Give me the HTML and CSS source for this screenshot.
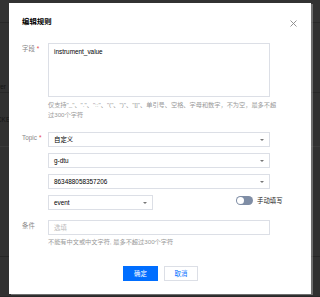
FILE: index.html
```html
<!DOCTYPE html>
<html lang="zh-CN">
<head>
<meta charset="utf-8">
<title>编辑规则</title>
<link rel="stylesheet" href="styles.css">
</head>
<body>
<div class="page">
  <div class="page-row r1"></div>
  <div class="page-row r2"><span>ver</span></div>
  <div class="page-row r3"><span>CKE</span></div>
  <div class="page-row r4"></div>
  <div class="page-row r5"></div>
</div>

<div class="modal">
  <div class="modal-head">
    <h3 class="modal-title">编辑规则</h3>
    <svg class="close" width="7" height="7" viewBox="0 0 7 7"><path d="M0.5 0.5L6.5 6.5M6.5 0.5L0.5 6.5" stroke="#888" stroke-width="0.9" fill="none"/></svg>
  </div>

  <div class="form">
    <div class="item">
      <div class="label">字段<i class="req">*</i></div>
      <div class="ctrl">
        <textarea class="textarea">instrument_value</textarea>
        <p class="hint wide">仅支持"_"、"."、"::"、"("、")"、"[]"、单引号、空格、字母和数字，不为空，最多不超过300个字符</p>
      </div>
    </div>

    <div class="item topic">
      <div class="label">Topic<i class="req">*</i></div>
      <div class="ctrl stack">
        <div class="select"><span>自定义</span><i class="caret"></i></div>
        <div class="select"><span>g-dtu</span><i class="caret"></i></div>
        <div class="select"><span>863488058357206</span><i class="caret"></i></div>
        <div class="event-row">
          <div class="select short"><span>event</span><i class="caret"></i></div>
          <div class="switch-wrap">
            <span class="switch"><span class="knob"></span></span>
            <span class="switch-label">手动填写</span>
          </div>
        </div>
      </div>
    </div>

    <div class="item cond">
      <div class="label">条件</div>
      <div class="ctrl">
        <div class="input"><span class="placeholder">选填</span></div>
        <p class="hint">不能有中文或中文字符, 最多不超过300个字符</p>
      </div>
    </div>
  </div>

  <div class="footer">
    <button class="btn primary">确定</button>
    <button class="btn">取消</button>
  </div>
</div>
</body>
</html>
```

FILE: styles.css
```css
* { box-sizing: border-box; }

html, body {
  margin: 0;
  padding: 0;
}

body {
  width: 320px;
  height: 297px;
  overflow: hidden;
  background: #313131;
  font-family: "Liberation Sans", "Noto Sans CJK SC", sans-serif;
  position: relative;
}

/* dimmed page behind the dialog */
.page {
  display: flex;
  flex-direction: column;
}
.page-row {
  border-bottom: 1px solid #282828;
  font-size: 6.4px;
  color: #151515;
  display: flex;
  align-items: center;
}
.page-row span { margin-left: -3px; }
.r1 { height: 23px; background: #323232; }
.r2 { height: 70px; align-items: flex-end; padding-bottom: 0; }
.r2 span { transform: translateY(-2px); }
.r3 { height: 54px; border-bottom-color: #3a3a3a; }
.r4 { height: 110px; border-bottom-color: #262626; }
.r5 { height: 40px; }

/* dialog */
.modal {
  position: absolute;
  left: 9px;
  top: 3px;
  width: 302px;
  height: 291px;
  background: #fff;
  box-shadow: 2px 1px 0 rgba(255, 255, 255, 0.3);
  padding: 14px 13px 13px 13px;
  display: flex;
  flex-direction: column;
}

.modal-head {
  display: flex;
  align-items: center;
  justify-content: space-between;
  height: 10px;
}
.modal-title {
  margin: 0;
  font-size: 7.4px;
  line-height: 10px;
  font-weight: bold;
  color: #000;
}
.close {
  margin-right: 1px;
  margin-top: 2px;
}

.form {
  margin-top: 16px;
  display: flex;
  flex-direction: column;
}

.item {
  display: grid;
  grid-template-columns: 26px 1fr;
}
.topic { margin-top: 12px; }
.cond { margin-top: 10px; }

.label {
  font-size: 6.4px;
  line-height: 10px;
  color: #888;
  padding-top: 1px;
}
.req {
  font-style: normal;
  color: #e54545;
  margin-left: 2px;
}

.ctrl {
  width: 222px;
  display: flex;
  flex-direction: column;
}
.stack { gap: 6px; }

.textarea {
  display: block;
  width: 222px;
  height: 54px;
  margin: 0;
  border: 1px solid #dcdfe6;
  border-radius: 0;
  padding: 3px 5px;
  font-family: inherit;
  font-size: 6.4px;
  line-height: 9px;
  color: #000;
  resize: none;
  outline: none;
}

.hint {
  margin: 3px 0 0;
  font-size: 6.2px;
  line-height: 10px;
  color: #999;
}
.hint.wide { width: 234px; }
.cond .hint { margin-top: 2px; }

.select, .input {
  height: 15px;
  border: 1px solid #dcdfe6;
  display: flex;
  align-items: center;
  justify-content: space-between;
  padding: 0 5px;
  font-size: 6.4px;
  color: #000;
}
.caret {
  width: 0;
  height: 0;
  border-left: 2px solid transparent;
  border-right: 2px solid transparent;
  border-top: 2px solid #777;
  margin-right: 0;
}
.placeholder { color: #bbb; }

.event-row {
  display: flex;
  align-items: flex-start;
  width: 240px;
}
.select.short { width: 105px; }

.switch-wrap {
  margin-left: 83px;
  margin-top: 1px;
  display: flex;
  align-items: center;
  gap: 4px;
}
.switch {
  width: 17px;
  height: 9px;
  border-radius: 5px;
  background: #7f8da5;
  position: relative;
  display: block;
}
.knob {
  position: absolute;
  left: 1px;
  top: 1px;
  width: 7px;
  height: 7px;
  border-radius: 50%;
  background: #fff;
}
.switch-label {
  font-size: 6.4px;
  color: #222;
}

.footer {
  margin-top: auto;
  display: flex;
  justify-content: center;
  gap: 6px;
  padding-left: 1px;
}
.btn {
  height: 15px;
  width: 34px;
  padding: 0;
  margin: 0;
  border: 1px solid #dcdfe6;
  background: #fff;
  color: #006eff;
  font-family: inherit;
  font-size: 6.4px;
  line-height: 13px;
  border-radius: 0;
}
.btn.primary {
  width: 35px;
  background: #006eff;
  border-color: #006eff;
  color: #fff;
}
```
